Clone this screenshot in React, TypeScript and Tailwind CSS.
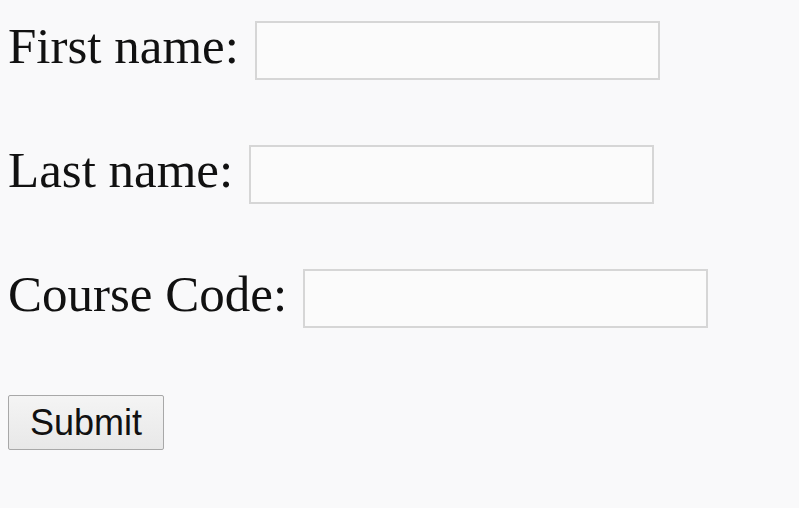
import React from "react";

const serif = { fontFamily: '"Liberation Serif", "Times New Roman", serif' };

function Row({ label, mb }: { label: string; mb: string }) {
  return (
    <div className={`flex items-start gap-4 ${mb}`}>
      <label
        className="text-[51px] leading-[59px] text-[#111111] mt-[-4px] whitespace-nowrap"
        style={serif}
      >
        {label}
      </label>
      <input
        type="text"
        className="w-[405px] h-[59px] border-2 border-[#d6d6d6] bg-[#fbfbfb] outline-none"
      />
    </div>
  );
}

export default function App() {
  return (
    <div className="w-[799px] h-[508px] bg-[#f9f9fa] pl-2 pt-[21px] overflow-hidden">
      <div className="flex flex-col">
        <div className="flex items-start gap-4 mb-[65px]">
          <label
            className="text-[51px] leading-[59px] text-[#111111] mt-[-4px] whitespace-nowrap"
            style={serif}
          >
            First name:
          </label>
          <input
            type="text"
            className="w-[405px] h-[59px] border-2 border-[#d6d6d6] bg-[#fbfbfb] outline-none"
          />
        </div>
        <div className="flex items-start gap-4 mb-[65px]">
          <label
            className="text-[51px] leading-[59px] text-[#111111] mt-[-4px] whitespace-nowrap"
            style={serif}
          >
            Last name:
          </label>
          <input
            type="text"
            className="w-[405px] h-[59px] border-2 border-[#d6d6d6] bg-[#fbfbfb] outline-none"
          />
        </div>
        <div className="flex items-start gap-4 mb-[67px]">
          <label
            className="text-[51px] leading-[59px] text-[#111111] mt-[-4px] whitespace-nowrap"
            style={serif}
          >
            Course Code:
          </label>
          <input
            type="text"
            className="w-[405px] h-[59px] border-2 border-[#d6d6d6] bg-[#fbfbfb] outline-none"
          />
        </div>
        <div className="flex">
          <button
            className="w-[156px] h-[55px] border border-[#a8a8a8] rounded-[2px] bg-gradient-to-b from-[#f4f4f4] to-[#e8e8e8] text-[36px] text-[#111111] leading-none flex items-center justify-center"
            style={{ fontFamily: '"Liberation Sans", Arial, sans-serif' }}
          >
            Submit
          </button>
        </div>
      </div>
    </div>
  );
}
